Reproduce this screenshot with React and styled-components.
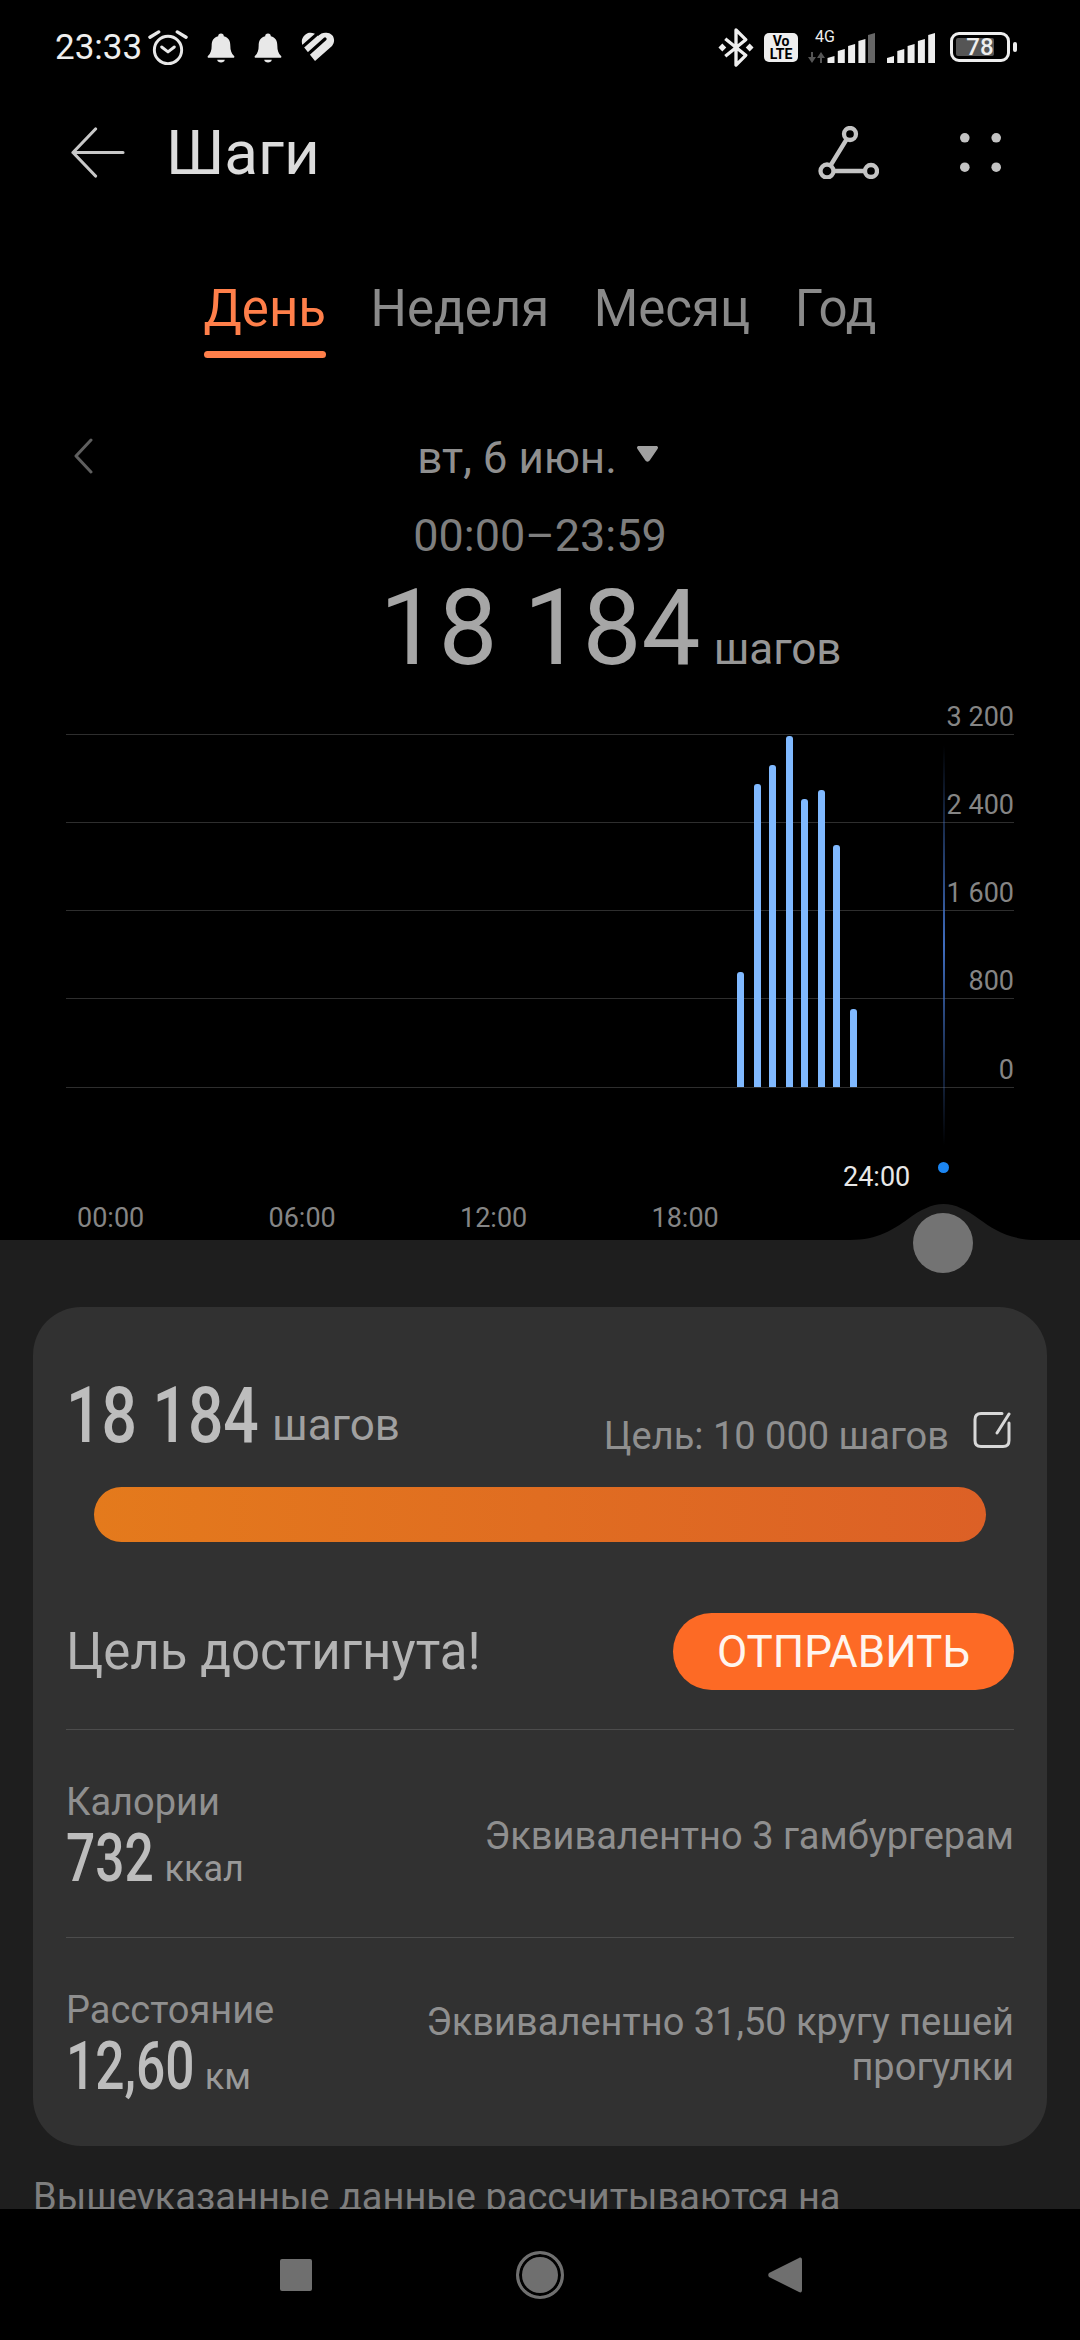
import React from "react";
import styled, { createGlobalStyle } from "styled-components";

const GlobalStyle = createGlobalStyle`
	html, body { margin: 0; padding: 0; background: #000; }
	body { font-family: Roboto, "Noto Sans", sans-serif; }
	* { box-sizing: border-box; }
`;

const BARS = [
	{ x: 737, top: 972 },
	{ x: 754, top: 784 },
	{ x: 769, top: 765 },
	{ x: 786, top: 736 },
	{ x: 801, top: 799 },
	{ x: 818, top: 790 },
	{ x: 833, top: 845 },
	{ x: 850, top: 1009 },
];
const GRID = [
	{ y: 734, label: "3 200" },
	{ y: 822, label: "2 400" },
	{ y: 910, label: "1 600" },
	{ y: 998, label: "800" },
	{ y: 1087, label: "0" },
];
const CHART_TOP = 700;
const CHART_LEFT = 66;
const SIGNAL_HEIGHTS = [7, 14, 19, 24, 30];

const signalBar = (x, height) => `M${x} 31V${33 - height}L${x + 7} ${31 - height}V31Z`;

const App = () => (
	<Screen>
		<GlobalStyle />
		<StatusBar>
			<StatusGroup>
				<Clock>23:33</Clock>
				<svg width="40" height="37" viewBox="0 0 41 37" fill="none" stroke="#e8e8e8" strokeWidth="3">
					<circle cx="20.5" cy="21" r="14" />
					<path d="M14 18l6.5 5 6.5-5" strokeWidth="3" strokeLinecap="round" strokeLinejoin="round" />
					<path d="M2 8l9-5.5M39 8l-9-5.5" strokeWidth="3.4" strokeLinecap="round" />
				</svg>
				<BellIcon />
				<BellIcon />
				<svg width="34" height="30" viewBox="0 0 34 30">
					<path d="M14 29L31 14C35 9 33 2 27 1 23 0 20 1 17 4 14 1 10 0 7 1 2 3-1 9 2 14z" fill="#e8e8e8" />
					<path d="M-1 17L15 3M5 24L24 7" fill="none" stroke="#000" strokeWidth="3.2" strokeLinecap="round" />
				</svg>
			</StatusGroup>
			<StatusGroup>
				<svg width="36" height="39" viewBox="0 0 36 40" fill="none" stroke="#eee" strokeWidth="3.400">
					<path d="M7 11l21 17-10 10V2l10 10L7 29" strokeLinejoin="round" />
					<path d="M4 16l4 4-4 4-4-4zM32 16l4 4-4 4-4-4z" fill="#eee" stroke="none" />
				</svg>
				<VoLte>Vo<br />LTE</VoLte>
				<Signal>
					<NetLabel>4G</NetLabel>
					<svg width="67" height="31" viewBox="0 0 67 31">
						<path d="M5 20v5H8l-4 6-4-6h3v-5zM12 31v-5H9l4-6 4 6h-3v5z" fill="#555" />
						<path d={SIGNAL_HEIGHTS.slice(0, 4).map((h, i) => signalBar(19.5 + i * 10.3, h)).join("")} fill="#eee" />
						<path d={signalBar(60, 30)} fill="#666" />
					</svg>
				</Signal>
				<SecondSignal width="48" height="31" viewBox="0 0 48 31" fill="#eee">
					<path d={SIGNAL_HEIGHTS.map((h, i) => signalBar(i * 10.3, h)).join("")} />
				</SecondSignal>
				<Battery>
					<BatteryFill />
					<BatteryText>78</BatteryText>
					<BatteryCap />
				</Battery>
			</StatusGroup>
		</StatusBar>

		<Header>
			<HeaderLeft>
				<svg width="55" height="51" viewBox="0 0 56 52" fill="none" stroke="#c8c8c8" strokeWidth="3.200" strokeLinecap="round" strokeLinejoin="round">
					<path d="M54 26H3M26 2L3 26l23 24" />
				</svg>
				<Title>Шаги</Title>
			</HeaderLeft>
			<HeaderActions>
				<svg width="61" height="53" viewBox="0 0 61 53" fill="none" stroke="#c4c4c4" strokeWidth="4.300">
					<circle cx="32" cy="8" r="6" />
					<circle cx="9" cy="45" r="6.500" />
					<circle cx="53" cy="45" r="6" />
					<path d="M28.500 13.500L12.500 39.500M15.500 45H47" />
				</svg>
				<svg width="41" height="39" viewBox="0 0 41 39" fill="#c4c4c4">
					<circle cx="4.800" cy="4.800" r="4.800" />
					<circle cx="36.200" cy="4.800" r="4.800" />
					<circle cx="4.800" cy="34.200" r="4.800" />
					<circle cx="36.200" cy="34.200" r="4.800" />
				</svg>
			</HeaderActions>
		</Header>

		<Tabs>
			<Tab $active>День</Tab>
			<Tab>Неделя</Tab>
			<Tab>Месяц</Tab>
			<Tab>Год</Tab>
		</Tabs>

		<DateRow>
			<ChevronWrap>
				<svg width="20" height="36" viewBox="0 0 20 36" fill="none" stroke="#5f5f5f" strokeWidth="3" strokeLinecap="round" strokeLinejoin="round">
					<path d="M18 2L3 18l15 16" />
				</svg>
			</ChevronWrap>
			<DateLabel>вт, 6 июн.</DateLabel>
			<Caret width="21" height="16" viewBox="0 0 21 16" fill="#a0a0a0">
				<path d="M2 0h17c2 0 2.500 1.500 1.500 3L13 14c-1.500 2.300-3.500 2.300-5 0L.5 3C-.5 1.500 0 0 2 0z" />
			</Caret>
		</DateRow>
		<TimeRange>00:00–23:59</TimeRange>
		<Total>
			<TotalValue>18 184</TotalValue>
			<TotalUnit>шагов</TotalUnit>
		</Total>

		<Chart>
			{GRID.map(line => (
				<GridLine key={line.y} style={{ top: line.y - CHART_TOP }}>
					<GridLabel>{line.label}</GridLabel>
				</GridLine>
			))}
			{BARS.map(bar => (
				<Bar key={bar.x} style={{ left: bar.x - CHART_LEFT, top: bar.top - CHART_TOP, height: 1087 - bar.top }} />
			))}
			<Cursor />
			<CursorDot />
			<CursorTime>24:00</CursorTime>
			<Axis>
				<span>00:00</span>
				<span>06:00</span>
				<span>12:00</span>
				<span>18:00</span>
			</Axis>
		</Chart>

		<Sheet>
			<Bump width="187" height="38" viewBox="0 0 187 38">
				<path d="M0 36C28 36 44 25 58 15 70 6 82 0 93.500 0 105 0 117 6 129 15 143 25 159 36 187 36V38H0z" fill="#1e1e1e" />
			</Bump>
			<Handle />
			<Card>
				<SummaryRow>
					<Figure>
						<BigNumber>18 184</BigNumber>
						<BigUnit>шагов</BigUnit>
					</Figure>
					<GoalWrap>
						<GoalText>Цель: 10 000 шагов</GoalText>
						<EditIcon width="38" height="38" viewBox="0 0 38 38" fill="none" stroke="#d8d8d8" strokeWidth="3" strokeLinecap="round">
							<path d="M29 2.500H8C4 2.500 2 4.500 2 8.500v21c0 4 2 6 6 6h22c4 0 6-2 6-6V12" />
							<path d="M36 3L24 22" />
						</EditIcon>
					</GoalWrap>
				</SummaryRow>
				<Progress />
				<GoalRow>
					<GoalReached>Цель достигнута!</GoalReached>
					<SendButton>ОТПРАВИТЬ</SendButton>
				</GoalRow>
				<Metric>
					<div>
						<MetricName>Калории</MetricName>
						<MetricValue>
							<MetricNumber $trim={24}>732</MetricNumber>
							<MetricUnit>ккал</MetricUnit>
						</MetricValue>
					</div>
					<MetricNote>Эквивалентно 3 гамбургерам</MetricNote>
				</Metric>
				<Metric>
					<div>
						<MetricName>Расстояние</MetricName>
						<MetricValue>
							<MetricNumber $trim={36}>12,60</MetricNumber>
							<MetricUnit>км</MetricUnit>
						</MetricValue>
					</div>
					<MetricNote>Эквивалентно 31,50 кругу пешей прогулки</MetricNote>
				</Metric>
			</Card>
			<Footnote>Вышеуказанные данные рассчитываются на</Footnote>
		</Sheet>

		<NavBar>
			<NavSquare />
			<NavCircle />
			<svg width="34" height="36" viewBox="0 0 34 36" fill="#6f6f6f">
				<path d="M31 1c2-1 3 0 3 2v30c0 2-1 3-3 2L1 20c-1-1-1-3 0-4z" />
			</svg>
		</NavBar>
	</Screen>
);

const BellIcon = () => (
	<svg width="28" height="31" viewBox="0 0 30 32" fill="#e8e8e8">
		<path d="M15 1c2 0 3 1 3 3 5 1 7 5 7 10 0 5 1 8 4 11 1 1 0 2-1 2H2c-1 0-2-1-1-2 3-3 4-6 4-11 0-5 2-9 7-10 0-2 1-3 3-3z" />
		<path d="M11 29h8c0 2-2 3-4 3s-4-1-4-3z" />
	</svg>
);

export default App;

const Screen = styled.div`
	display: flex;
	flex-direction: column;
	position: relative;
	width: 1080px;
	height: 2340px;
	overflow: hidden;
	background: #000;
	color: #9a9a9a;
`;
const StatusBar = styled.div`
	display: flex;
	justify-content: space-between;
	align-items: center;
	height: 94px;
	padding: 0 70px 0 55px;
`;
const StatusGroup = styled.div`
	display: flex;
	align-items: center;
	gap: 19px;
	&:last-child { gap: 10px; }
`;
const Clock = styled.span`
	margin-right: -13px;
	font-size: 35px;
	color: #eee;
`;
const VoLte = styled.span`
	width: 34px;
	height: 29px;
	border-radius: 5px;
	background: #eee;
	color: #000;
	font-size: 14px;
	font-weight: 700;
	line-height: 13px;
	text-align: center;
	padding-top: 2px;
`;
const Signal = styled.div`
	position: relative;
	height: 31px;
`;
const SecondSignal = styled.svg`
	margin: 0 5px 0 2px;
`;
const NetLabel = styled.span`
	position: absolute;
	left: 7px;
	top: -3px;
	font-size: 16px;
	line-height: 16px;
	color: #eee;
`;
const Battery = styled.div`
	position: relative;
	width: 60px;
	height: 30px;
	border: 3px solid #eee;
	border-radius: 9px;
`;
const BatteryFill = styled.div`
	position: absolute;
	left: 3px;
	top: 3px;
	bottom: 3px;
	width: 38px;
	background: #555;
	border-radius: 2px;
`;
const BatteryText = styled.span`
	position: absolute;
	inset: 0;
	text-align: center;
	font-size: 24px;
	line-height: 24px;
	font-weight: 500;
	color: #eee;
`;
const BatteryCap = styled.div`
	position: absolute;
	right: -10px;
	top: 7px;
	width: 4px;
	height: 10px;
	border-radius: 2px;
	background: #eee;
`;
const Header = styled.div`
	display: flex;
	justify-content: space-between;
	align-items: center;
	height: 120px;
	padding: 0 79px 4px 70px;
`;
const HeaderLeft = styled.div`
	display: flex;
	align-items: center;
	gap: 41px;
`;
const HeaderActions = styled.div`
	display: flex;
	align-items: center;
	gap: 81px;
`;
const Title = styled.h1`
	margin: 0;
	font-size: 62px;
	font-weight: 400;
	color: #dcdcdc;
`;
const Tabs = styled.div`
	display: flex;
	justify-content: center;
	gap: 44.5px;
	margin-top: 60px;
`;
const Tab = styled.div`
	position: relative;
	height: 70px;
	font-size: 51px;
	line-height: 70px;
	color: ${({ $active }) => ($active ? "#ff7f4a" : "#8a8a8a")};
	&::after {
		content: "";
		display: ${({ $active }) => ($active ? "block" : "none")};
		position: absolute;
		left: 0;
		right: 0;
		bottom: -14px;
		height: 7px;
		border-radius: 4px;
		background: #ff7f4a;
	}
`;
const DateRow = styled.div`
	position: relative;
	display: flex;
	justify-content: center;
	align-items: center;
	gap: 20px;
	height: 56px;
	margin-top: 86px;
	padding-right: 5px;
`;
const ChevronWrap = styled.div`
	position: absolute;
	left: 73px;
	top: 8px;
`;
const DateLabel = styled.span`
	font-size: 44px;
	color: #8f8f8f;
`;
const Caret = styled.svg`
	margin-bottom: 8px;
`;
const TimeRange = styled.div`
	margin-top: 22px;
	text-align: center;
	font-size: 45px;
	line-height: 56px;
	color: #7e7e7e;
`;
const Total = styled.div`
	display: flex;
	justify-content: center;
	align-items: baseline;
	gap: 13px;
	height: 110px;
	margin-top: 10px;
	padding-left: 141px;
`;
const TotalValue = styled.span`
	font-size: 105px;
	line-height: 110px;
	color: #a6a6a6;
`;
const TotalUnit = styled.span`
	font-size: 44px;
	color: #969696;
`;
const Chart = styled.div`
	position: absolute;
	left: ${CHART_LEFT}px;
	top: ${CHART_TOP}px;
	width: 948px;
	height: 540px;
`;
const GridLine = styled.div`
	position: absolute;
	left: 0;
	right: 0;
	height: 1px;
	background: #2e2e2e;
`;
const GridLabel = styled.span`
	position: absolute;
	right: 0;
	bottom: 2px;
	font-size: 27px;
	line-height: 32px;
	color: #858585;
`;
const Bar = styled.div`
	position: absolute;
	width: 7px;
	border-radius: 3px 3px 0 0;
	background: #80b9ff;
`;
const Cursor = styled.div`
	position: absolute;
	left: 877px;
	top: 45px;
	width: 2px;
	height: 400px;
	background: linear-gradient(180deg, rgba(46, 90, 170, 0) 0%, #3f6cbd 50%, rgba(46, 90, 170, 0) 100%);
`;
const CursorDot = styled.div`
	position: absolute;
	left: 872px;
	top: 462px;
	width: 11px;
	height: 11px;
	border-radius: 50%;
	background: #1c86f2;
`;
const CursorTime = styled.span`
	position: absolute;
	left: 777px;
	top: 461px;
	font-size: 27px;
	line-height: 32px;
	color: #e8e8e8;
`;
const Axis = styled.div`
	position: absolute;
	left: 11px;
	top: 502px;
	display: grid;
	grid-template-columns: repeat(4, 191.5px);
	font-size: 27px;
	line-height: 32px;
	color: #858585;
`;
const Sheet = styled.div`
	position: absolute;
	left: 0;
	right: 0;
	top: 1240px;
	bottom: 0;
	padding: 67px 33px 0;
	background: #1e1e1e;
`;
const Bump = styled.svg`
	position: absolute;
	left: 850px;
	top: -36px;
`;
const Handle = styled.div`
	position: absolute;
	left: 913px;
	top: -27px;
	width: 60px;
	height: 60px;
	border-radius: 50%;
	background: #737373;
`;
const Card = styled.div`
	height: 839px;
	padding: 0 33px;
	border-radius: 48px;
	background: #313131;
`;
const SummaryRow = styled.div`
	display: flex;
	justify-content: space-between;
	align-items: flex-start;
	height: 136px;
	padding-top: 70px;
`;
const Figure = styled.div`
	display: flex;
	align-items: flex-start;
	gap: 13px;
`;
const BigNumber = styled.span`
	display: inline-block;
	margin-right: -48px;
	font-size: 78px;
	line-height: 78px;
	font-weight: 500;
	color: #bdbdbd;
	transform: scaleX(0.8);
	transform-origin: left;
`;
const BigUnit = styled.span`
	margin-top: 22px;
	font-size: 44px;
	color: #a0a0a0;
`;
const GoalWrap = styled.div`
	display: flex;
	align-items: baseline;
	gap: 24px;
	margin-top: 34px;
`;
const GoalText = styled.span`
	font-size: 38px;
	color: #8f8f8f;
`;
const EditIcon = styled.svg`
	margin: 0 3px -6px 0;
`;
const Progress = styled.div`
	height: 55px;
	margin: 44px 28px 0;
	border-radius: 28px;
	background: linear-gradient(90deg, #e47a1c 0%, #dc6026 100%);
`;
const GoalRow = styled.div`
	display: flex;
	justify-content: space-between;
	align-items: center;
	height: 188px;
	padding-top: 32px;
	border-bottom: 1px solid #4c4c4c;
`;
const GoalReached = styled.span`
	font-size: 51px;
	color: #b4b4b4;
`;
const SendButton = styled.button`
	width: 341px;
	height: 77px;
	padding: 0;
	border: none;
	border-radius: 39px;
	background: #fd6a25;
	font-family: inherit;
	font-size: 44px;
	color: #fff5ee;
`;
const Metric = styled.div`
	display: flex;
	justify-content: space-between;
	align-items: center;
	height: 208px;
	padding-top: 6px;
	border-bottom: 1px solid #4c4c4c;
	&:last-child { border-bottom: none; }
`;
const MetricName = styled.div`
	font-size: 38px;
	line-height: 44px;
	color: #8f8f8f;
`;
const MetricValue = styled.div`
	display: flex;
	align-items: baseline;
	gap: 10px;
`;
const MetricNumber = styled.span`
	display: inline-block;
	margin-right: ${({ $trim }) => -$trim}px;
	font-size: 66px;
	line-height: 70px;
	font-weight: 500;
	color: #bdbdbd;
	transform: scaleX(0.78);
	transform-origin: left;
`;
const MetricUnit = styled.span`
	font-size: 36px;
	color: #999;
`;
const MetricNote = styled.div`
	width: 620px;
	text-align: right;
	font-size: 38px;
	line-height: 45px;
	color: #8f8f8f;
`;
const Footnote = styled.div`
	margin-top: 28px;
	font-size: 38px;
	line-height: 46px;
	color: #7e7e7e;
`;
const NavBar = styled.div`
	position: absolute;
	left: 0;
	right: 0;
	bottom: 0;
	display: flex;
	justify-content: center;
	align-items: center;
	gap: 204px;
	height: 131px;
	padding-left: 2px;
	background: #000;
`;
const NavSquare = styled.div`
	width: 32px;
	height: 32px;
	border-radius: 2px;
	background: #6f6f6f;
`;
const NavCircle = styled.div`
	width: 48px;
	height: 48px;
	border-radius: 50%;
	border: 3px solid #6f6f6f;
	background: #6f6f6f;
	box-shadow: inset 0 0 0 3px #000;
`;
